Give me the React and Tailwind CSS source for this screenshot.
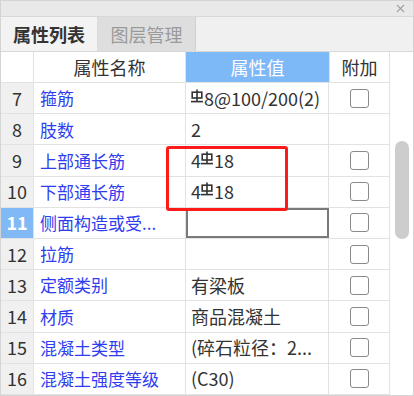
import { X } from "lucide-react";

const FONT = { fontFamily: '"Microsoft YaHei", "Noto Sans CJK SC", "Noto Sans", sans-serif' };

// rebar grade symbol
const Bar = () => (
  <svg width="12" height="15" viewBox="0 0 12 15" className="inline-block mr-[1px] -mt-[4px]">
    <rect x="1.2" y="3.2" width="9.6" height="5.8" fill="none" stroke="#333" strokeWidth="1.6" />
    <line x1="6" y1="0.5" x2="6" y2="12.5" stroke="#333" strokeWidth="1.6" />
    <line x1="0" y1="12.6" x2="12" y2="12.6" stroke="#333" strokeWidth="1.6" />
  </svg>
);

const rows = [
  { n: 7, name: "箍筋", value: <><Bar />8@100/200(2)</>, check: true },
  { n: 8, name: "肢数", value: "2", check: false },
  { n: 9, name: "上部通长筋", value: <>4<Bar />18</>, check: true },
  { n: 10, name: "下部通长筋", value: <>4<Bar />18</>, check: true },
  { n: 11, name: "侧面构造或受...", value: "", check: true, active: true },
  { n: 12, name: "拉筋", value: "", check: true },
  { n: 13, name: "定额类别", value: "有梁板", check: true },
  { n: 14, name: "材质", value: "商品混凝土", check: true },
  { n: 15, name: "混凝土类型", value: "(碎石粒径：2...", check: true },
  { n: 16, name: "混凝土强度等级", value: "(C30)", check: true },
];

const App = () => {
  return (
    <div
      className="relative w-[414px] h-[396px] overflow-hidden bg-[#f0f0f0] border border-[#d4d4d4]"
      style={FONT}
    >
      {/* Title bar */}
      <div className="h-[16px] flex justify-end items-center pr-[6px] bg-[#e9e9e9] border-b border-[#d8d8d8]">
        <X size={13} color="#a0a0a0" strokeWidth={2} />
      </div>

      {/* Tabs */}
      <div className="h-[35px] flex border-b border-[#d8d8d8]">
        <div className="w-[97px] flex items-center justify-center bg-[#f3f3f3] border-r border-[#dcdcdc] text-[18px] font-bold text-[#333]">
          属性列表
        </div>
        <div className="w-[98px] flex items-center justify-center bg-[#dedede] border-r border-[#d0d0d0] text-[18px] text-[#9a9a9a]">
          图层管理
        </div>
        <div className="flex-1 bg-[#f0f0f0]" />
      </div>

      {/* Table */}
      <div className="flex bg-white h-full">
        <div className="w-[388px]">
          <div className="flex h-[31px] border-b border-[#e2e2e2] text-[18px]">
            <div className="w-[33px] border-r border-[#e2e2e2]" />
            <div className="w-[152px] flex items-center justify-center text-[#333] border-r border-[#e2e2e2]">
              属性名称
            </div>
            <div className="w-[143px] flex items-center justify-center text-white bg-[#7db8f7]">
              属性值
            </div>
            <div className="w-[60px] flex items-center justify-center text-[#333] border-l border-[#e2e2e2]">
              附加
            </div>
          </div>

          {rows.map((r) => (
            <div key={r.n} className="flex h-[31.2px] border-b border-[#e2e2e2] text-[17px]">
              <div
                className={`w-[33px] flex items-center justify-center border-r border-[#e2e2e2] text-[18px] ${
                  r.active ? "bg-[#80b9f5] text-white font-bold" : "bg-[#f0f0f0] text-[#333]"
                }`}
              >
                {r.n}
              </div>
              <div className="w-[152px] flex items-center pl-[6px] text-[#2f3df0] border-r border-[#e2e2e2] whitespace-nowrap overflow-hidden">
                {r.name}
              </div>
              <div
                className={`w-[143px] flex items-center pl-[5px] text-[#333] text-[18px] whitespace-nowrap overflow-hidden ${
                  r.active ? "border-2 border-[#7a7a7a]" : "border-r border-[#e2e2e2]"
                }`}
              >
                {r.value}
              </div>
              <div className="w-[60px] flex items-center justify-center">
                {r.check && (
                  <div className="w-[19px] h-[19px] rounded-[3px] border-[1.5px] border-[#8a8a8a] bg-white" />
                )}
              </div>
            </div>
          ))}
        </div>

        {/* Scrollbar */}
        <div className="flex-1 border-l border-[#e2e2e2] bg-white" />
      </div>

      <div className="absolute left-[394px] top-[140px] w-[14px] h-[98px] rounded-full bg-[#cdcdcd]" />

      {/* Highlight box */}
      <div className="absolute left-[165px] top-[145px] w-[122px] h-[65px] border-[3px] border-[#ff1a1a] rounded-[3px]" />
    </div>
  );
};

export default App;
